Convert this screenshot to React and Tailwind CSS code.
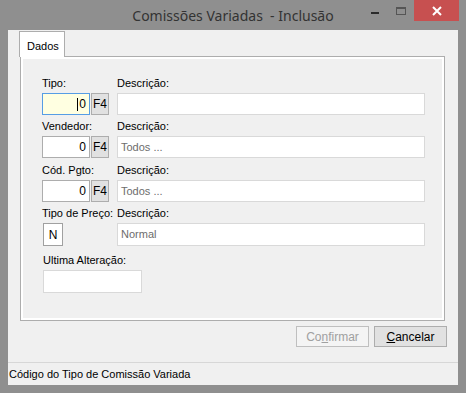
export default function App() {
  const label = "h-[13px] leading-[13px] text-[11px] text-black whitespace-nowrap";

  return (
    <div
      className="w-[466px] h-[393px] bg-[#8f8f8f] flex flex-col overflow-hidden"
      style={{ fontFamily: '"Liberation Sans", Arial, sans-serif' }}
    >
      {/* TITLE BAR */}
      <div className="relative h-[30px] flex items-center justify-center shrink-0">
        <span
          className="text-[14px] text-[#333] whitespace-pre"
          style={{ fontFamily: '"Noto Sans", sans-serif' }}
        >
          Comissões Variadas  - Inclusão
        </span>
        <div className="absolute top-0 right-[7px] flex">
          <div className="w-[26px] h-[21px] flex items-center justify-center">
            <div className="w-[8px] h-[2px] bg-[#2b2b2b] mt-[5px]" />
          </div>
          <div className="w-[26px] h-[21px] flex items-center justify-center">
            <div className="w-[10px] h-[8px] border border-t-2 border-[#555] mt-[1px]" />
          </div>
          <div className="w-[45px] h-[21px] bg-[#c75050] flex items-center justify-center">
            <svg width="10" height="10" viewBox="0 0 10 10">
              <path d="M1 1 L9 9 M9 1 L1 9" stroke="white" strokeWidth="2" />
            </svg>
          </div>
        </div>
      </div>

      {/* CLIENT AREA */}
      <div className="mx-[8px] h-[355px] bg-[#f0f0f0] flex flex-col shrink-0">
        <div className="pt-[1px] pl-[12px] pr-[13px]">
          {/* TAB HEADER */}
          <div className="flex">
            <div className="relative z-10 -mb-px w-[46px] h-[26px] bg-white border border-b-0 border-[#adadad] -ml-px">
              <span className="absolute left-[7px] top-[8px] text-[11px] leading-[13px] text-black">
                Dados
              </span>
            </div>
          </div>
          {/* TAB PAGE */}
          <div className="h-[265px] border border-[#adadad] bg-white p-[2px]">
            <div className="h-full bg-[#f0f0f0] pl-[19px] pt-[18px]">
              {/* Tipo */}
              <div className="flex">
                <div className="w-[75px]">
                  <div className={label}>Tipo:</div>
                  <div className="mt-[3px] flex">
                    <div className="w-[48px] h-[22px] bg-[#ffffe1] border border-[#569de5] flex items-center justify-end pr-[3px] text-[12px] text-black">
                      <span className="w-px h-[13px] bg-black mr-[1px]" />
                      0
                    </div>
                    <div className="ml-px w-[18px] h-[22px] bg-[#e1e1e1] border border-[#adadad] flex items-center justify-center text-[12px] text-black">
                      F4
                    </div>
                  </div>
                </div>
                <div>
                  <div className={label}>Descrição:</div>
                  <div className="mt-[3px] w-[308px] h-[22px] bg-white border border-[#d9d9d9]" />
                </div>
              </div>

              {/* Vendedor */}
              <div className="flex mt-[5px]">
                <div className="w-[75px]">
                  <div className={label}>Vendedor:</div>
                  <div className="mt-[3px] flex">
                    <div className="w-[48px] h-[22px] bg-white border border-[#adadad] flex items-center justify-end pr-[3px] text-[12px] text-black">
                      0
                    </div>
                    <div className="ml-px w-[18px] h-[22px] bg-[#e1e1e1] border border-[#adadad] flex items-center justify-center text-[12px] text-black">
                      F4
                    </div>
                  </div>
                </div>
                <div>
                  <div className={label}>Descrição:</div>
                  <div className="mt-[3px] w-[308px] h-[22px] bg-white border border-[#d9d9d9] flex items-center pl-[3px] text-[11px] text-[#6d6d6d]">
                    Todos ...
                  </div>
                </div>
              </div>

              {/* Cod. Pgto */}
              <div className="flex mt-[6px]">
                <div className="w-[75px]">
                  <div className={label}>Cód. Pgto:</div>
                  <div className="mt-[3px] flex">
                    <div className="w-[48px] h-[22px] bg-white border border-[#adadad] flex items-center justify-end pr-[3px] text-[12px] text-black">
                      0
                    </div>
                    <div className="ml-px w-[18px] h-[22px] bg-[#e1e1e1] border border-[#adadad] flex items-center justify-center text-[12px] text-black">
                      F4
                    </div>
                  </div>
                </div>
                <div>
                  <div className={label}>Descrição:</div>
                  <div className="mt-[3px] w-[308px] h-[22px] bg-white border border-[#d9d9d9] flex items-center pl-[3px] text-[11px] text-[#6d6d6d]">
                    Todos ...
                  </div>
                </div>
              </div>

              {/* Tipo de Preco */}
              <div className="flex mt-[5px]">
                <div className="w-[75px]">
                  <div className={label}>Tipo de Preço:</div>
                  <div className="mt-[3px] ml-px w-[20px] h-[23px] bg-white border border-[#a0a0a0] flex items-center justify-center text-[12px] text-black">
                    N
                  </div>
                </div>
                <div>
                  <div className={label}>Descrição:</div>
                  <div className="mt-[3px] w-[308px] h-[23px] bg-white border border-[#d9d9d9] flex items-center pl-[3px] text-[11px] text-[#6d6d6d]">
                    Normal
                  </div>
                </div>
              </div>

              {/* Ultima Alteracao */}
              <div className="mt-[8px] ml-px">
                <div className={label}>Ultima Alteração:</div>
                <div className="mt-[3px] w-[99px] h-[23px] bg-white border border-[#d9d9d9]" />
              </div>
            </div>
          </div>
        </div>

        {/* BUTTONS */}
        <div className="mt-[5px] flex justify-end gap-[5px] pr-[11px]">
          <div className="w-[73px] h-[21px] bg-[#f4f4f4] border border-[#bfbfbf] flex items-center justify-center text-[12px] text-[#a0a0a0]">
            Co<span className="underline">n</span>firmar
          </div>
          <div className="w-[73px] h-[21px] bg-[#e1e1e1] border border-[#adadad] flex items-center justify-center text-[12px] text-black">
            <span className="underline">C</span>ancelar
          </div>
        </div>

        {/* STATUS BAR */}
        <div className="mt-auto h-[23px] border-t border-[#d7d7d7] flex items-center pl-[1px] text-[11px] text-black">
          Código do Tipo de Comissão Variada
        </div>
      </div>
    </div>
  );
}
